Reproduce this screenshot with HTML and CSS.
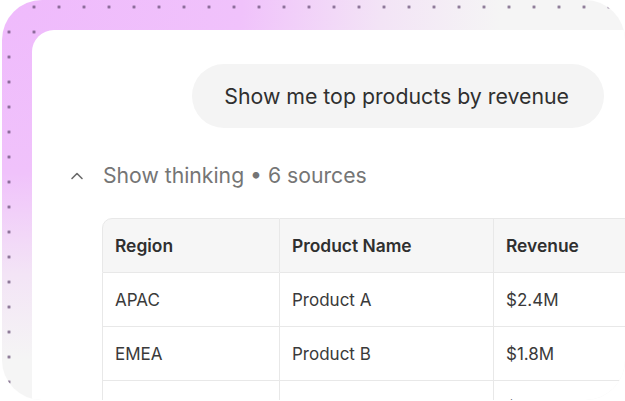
FILE: index.html
```html
<!DOCTYPE html>
<html>
<head>
<meta charset="utf-8">
<link rel="stylesheet" href="styles.css">
</head>
<body>
<div class="frame">
  <div class="card">
    <div class="chat">
      <div class="bubble">Show me top products by revenue</div>
    </div>
    <div class="thinking">
      <svg class="chev" width="14" height="8" viewBox="0 0 14 8"><path d="M2 6.5 L7 1.5 L12 6.5" fill="none" stroke="#6b6b6b" stroke-width="1.6" stroke-linecap="round" stroke-linejoin="round"/></svg>
      <span>Show thinking • 6 sources</span>
    </div>
    <table class="data">
      <thead>
        <tr><th class="c1">Region</th><th class="c2">Product Name</th><th class="c3">Revenue</th></tr>
      </thead>
      <tbody>
        <tr><td>APAC</td><td>Product A</td><td>$2.4M</td></tr>
        <tr><td>EMEA</td><td>Product B</td><td>$1.8M</td></tr>
        <tr><td>NA</td><td>Product C</td><td>$1.5M</td></tr>
      </tbody>
    </table>
  </div>
</div>
</body>
</html>
```

FILE: styles.css
```css
html, body {
  margin: 0;
  padding: 0;
  background: #ffffff;
  width: 625px;
  height: 401px;
  overflow: hidden;
  font-family: "Inter", "Liberation Sans", sans-serif;
}

.frame {
  margin-left: 2px;
  width: 623px;
  height: 400px;
  border-radius: 40px;
  overflow: hidden;
  box-sizing: border-box;
  padding: 30px 0 0 30px;
  display: flex;
  background-color: #f5f5f5;
  background-image:
    radial-gradient(circle, rgba(95, 70, 110, 0.75) 0 1.2px, transparent 1.8px),
    radial-gradient(ellipse 500px 360px at 0 0, #efbafc 0%, #f0c2fb 48%, #f3e4f6 76%, rgba(245, 245, 245, 0) 100%);
  background-size: 25px 25px, 100% 100%;
  background-position: -5.5px -5.5px, 0 0;
}

.card {
  flex: 0 0 auto;
  width: 720px;
  background: #ffffff;
  border-top-left-radius: 22px;
  box-sizing: border-box;
  padding: 34px 0 0 38px;
  display: flex;
  flex-direction: column;
}

.chat {
  width: 534px;
  display: flex;
  justify-content: flex-end;
}

.bubble {
  height: 64px;
  box-sizing: border-box;
  padding: 0 35px 0 32px;
  border-radius: 32px;
  background: #f4f4f4;
  color: #2f2f2f;
  font-size: 21.3px;
  line-height: 64px;
  white-space: nowrap;
}

.thinking {
  margin-top: 34px;
  height: 32px;
  display: flex;
  align-items: center;
  gap: 19px;
  color: #757575;
  font-size: 21.2px;
}

.chev {
  display: block;
  margin-top: 1px;
}

.data {
  margin-top: 30px;
  margin-left: 32px;
  border-collapse: separate;
  border-spacing: 0;
  width: 640px;
  font-size: 17px;
  color: #333333;
}

.data th, .data td {
  text-align: left;
  padding: 0 0 0 12px;
  border-right: 1px solid #e8e8e8;
  border-bottom: 1px solid #e8e8e8;
  white-space: nowrap;
}

.data tr > :first-child {
  border-left: 1px solid #e8e8e8;
}

.data th {
  height: 53px;
  background: #f6f6f6;
  font-weight: 600;
  font-size: 17.4px;
  color: #2f2f2f;
  border-top: 1px solid #e8e8e8;
}

.data th.c1 {
  width: 164px;
  border-top-left-radius: 10px;
}

.data th.c2 {
  width: 201px;
}

.data td {
  height: 53px;
  font-weight: 400;
  color: #3a3a3a;
}
```
